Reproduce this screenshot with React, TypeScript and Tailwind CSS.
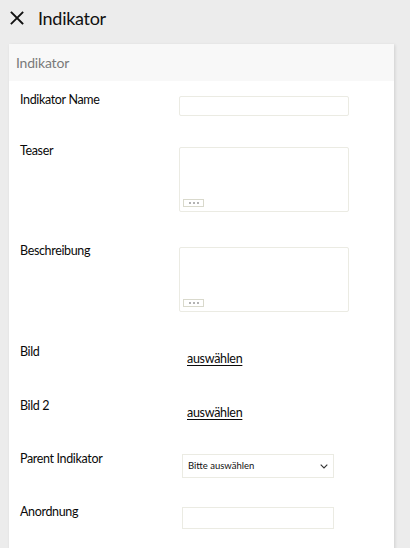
import React from "react";

const font = { fontFamily: '"Source Sans Pro", Lato, "Noto Sans", sans-serif' };

function Dots() {
  return (
    <div className="absolute left-[3px] bottom-[4px] w-[21px] h-[8px] border border-[#d9d9cc] bg-white flex items-center justify-center gap-[2px]">
      <span className="w-[2px] h-[2px] rounded-full bg-[#9a9a9a]" />
      <span className="w-[2px] h-[2px] rounded-full bg-[#9a9a9a]" />
      <span className="w-[2px] h-[2px] rounded-full bg-[#9a9a9a]" />
    </div>
  );
}

function Row({ label, h, children }: { label: string; h: string; children?: React.ReactNode }) {
  return (
    <div className={`flex ${h}`}>
      <div className="w-[159px] text-[12.5px] tracking-[-0.35px] leading-[20px] text-[#0a0a0a]">{label}</div>
      <div className="flex-1">{children}</div>
    </div>
  );
}

export default function App() {
  return (
    <div className="w-[410px] h-[548px] bg-[#ececec] overflow-hidden" style={font}>
      <div className="h-[44px] flex items-start pt-[6px] pl-[10px]">
        <svg width="14" height="14" viewBox="0 0 14 14" className="mt-[5px]">
          <path d="M1.5 1.5 L12.5 12.5 M12.5 1.5 L1.5 12.5" stroke="#111" strokeWidth="1.8" strokeLinecap="square" />
        </svg>
        <span className="ml-[14px] text-[18px] tracking-[-0.3px] leading-[24px] text-[#111]">Indikator</span>
      </div>
      <div className="ml-[9px] w-[385px] h-[520px] bg-white shadow-[1px_1px_3px_rgba(0,0,0,0.12)]">
        <div className="h-[37px] bg-[#f8f8f8] pl-[7px] flex items-center text-[14px] tracking-[-0.2px] text-[#7a7a7a]">Indikator</div>
        <div className="pt-[9px] pl-[11px]">
          <Row label="Indikator Name" h="h-[51px]">
            <div className="mt-[6px] w-[170px] h-[20px] border border-[#ebebe3] rounded-[2px] bg-white" />
          </Row>
          <Row label="Teaser" h="h-[100px]">
            <div className="relative mt-[6px] w-[170px] h-[65px] border border-[#ebebe3] rounded-[2px] bg-white">
              <Dots />
            </div>
          </Row>
          <Row label="Beschreibung" h="h-[101px]">
            <div className="relative mt-[6px] w-[170px] h-[65px] border border-[#ebebe3] rounded-[2px] bg-white">
              <Dots />
            </div>
          </Row>
          <Row label="Bild" h="h-[54px]">
            <a className="block mt-[7px] ml-[8px] text-[12.5px] tracking-[-0.3px] leading-[20px] text-[#0a0a0a] underline underline-offset-2">auswählen</a>
          </Row>
          <Row label="Bild 2" h="h-[53px]">
            <a className="block mt-[7px] ml-[8px] text-[12.5px] tracking-[-0.3px] leading-[20px] text-[#0a0a0a] underline underline-offset-2">auswählen</a>
          </Row>
          <Row label="Parent Indikator" h="h-[53px]">
            <div className="mt-[5px] ml-[3px] w-[152px] h-[24px] border border-[#ebebe3] bg-white flex items-center justify-between pl-[5px] pr-[5px] text-[9.5px] text-[#111]">
              <span>Bitte auswählen</span>
              <svg width="8" height="5" viewBox="0 0 8 5">
                <path d="M0.7 0.7 L4 4 L7.3 0.7" fill="none" stroke="#333" strokeWidth="1.1" />
              </svg>
            </div>
          </Row>
          <Row label="Anordnung" h="h-[53px]">
            <div className="mt-[5px] ml-[3px] w-[152px] h-[22px] border border-[#ebebe3] bg-white" />
          </Row>
        </div>
      </div>
    </div>
  );
}
